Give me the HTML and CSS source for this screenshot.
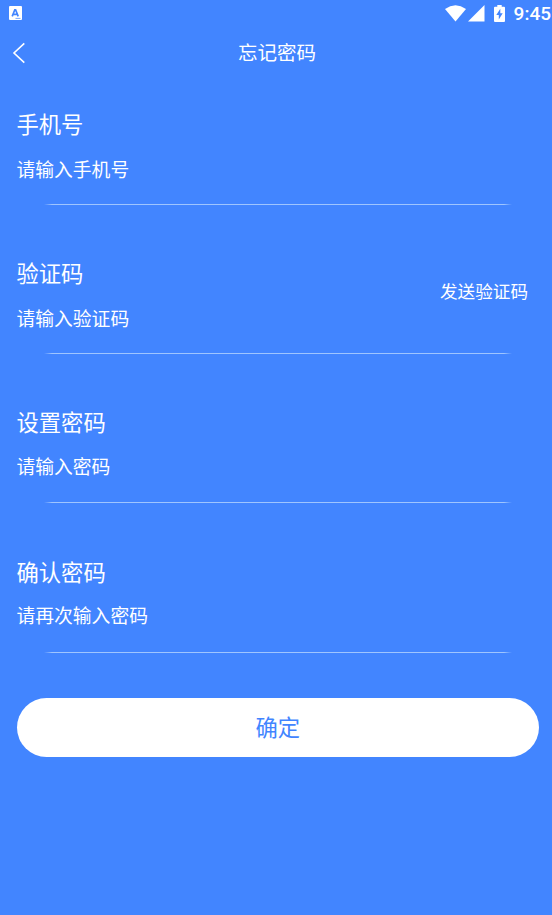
FILE: index.html
```html
<!DOCTYPE html>
<html lang="zh-CN">
<head>
    <meta charset="UTF-8">
    <meta name="viewport" content="width=device-width, initial-scale=1.0">
    <title>忘记密码</title>
    <link rel="stylesheet" href="styles.css">
</head>
<body>
    <div class="status-bar">
        <svg class="app-icon" width="13" height="14" viewBox="0 0 13 14">
            <rect width="13" height="14" rx="1" fill="#fff"/>
            <path d="M3.2 10.4 L5.8 3.8 H6.6 L9.2 10.4 M4.4 8.3 H8" fill="none" stroke="#4285ff" stroke-width="1.7"/>
            <path d="M6.5 12.4 H11.5" stroke="#4285ff" stroke-width="0.7"/>
        </svg>
        <div class="status-right">
            <svg class="wifi" width="21" height="17" viewBox="0 0 21 17">
                <path d="M0 4 Q10.5 -3.4 21 4 L10.5 16.5 Z" fill="#fff"/>
            </svg>
            <svg class="signal" width="17" height="17" viewBox="0 0 17 17">
                <path d="M16.5 0 V16.5 H0 Z" fill="#fff"/>
            </svg>
            <svg class="battery" width="11" height="17" viewBox="0 0 11 17">
                <path d="M3.3 0 H7.7 V1.7 H10 Q11 1.7 11 2.7 V16 Q11 17 10 17 H1 Q0 17 0 16 V2.7 Q0 1.7 1 1.7 H3.3 Z" fill="#fff"/>
                <path d="M6.3 3.8 L2.3 10 H4.8 V14.4 L8.7 8.2 H6.3 Z" fill="#4285ff"/>
            </svg>
            <span class="time">9:45</span>
        </div>
    </div>

    <div class="header">
        <svg class="back" width="14" height="22" viewBox="0 0 14 22">
            <path d="M12.3 1.4 L2 11 L12.3 20.6" fill="none" stroke="#fff" stroke-width="1.6"/>
        </svg>
        <h1>忘记密码</h1>
    </div>

    <form class="form">
        <div class="field">
            <label for="phone">手机号</label>
            <input id="phone" type="text" placeholder="请输入手机号">
            <div class="line"></div>
        </div>
        <div class="field code-field">
            <div class="code-left">
                <label for="code">验证码</label>
                <input id="code" type="text" placeholder="请输入验证码">
            </div>
            <button type="button" class="send">发送验证码</button>
            <div class="line"></div>
        </div>
        <div class="field password-field">
            <label for="password">设置密码</label>
            <input id="password" type="password" placeholder="请输入密码">
            <div class="line"></div>
        </div>
        <div class="field password-field">
            <label for="confirm">确认密码</label>
            <input id="confirm" type="password" placeholder="请再次输入密码">
            <div class="line"></div>
        </div>
        <button type="button" class="submit">确定</button>
    </form>
</body>
</html>
```
FILE: styles.css
```css
* {
    box-sizing: border-box;
}

body {
    margin: 0;
    min-height: 100vh;
    background-color: #4285ff;
    color: #fff;
    font-family: "Noto Sans CJK SC", sans-serif;
}

.status-bar {
    display: flex;
    justify-content: space-between;
    height: 30px;
    padding: 5px 1px 0 9px;
}

.app-icon {
    margin-top: 1px;
}

.status-right {
    display: flex;
    align-items: flex-start;
}

.signal {
    margin-left: 2px;
}

.battery {
    margin-left: 9px;
}

.time {
    margin-left: 9px;
    font-family: Roboto, sans-serif;
    font-size: 19px;
    font-weight: 500;
    line-height: 18px;
}

.header {
    display: flex;
    align-items: center;
    height: 46px;
    padding: 0 12px;
}

.header h1 {
    flex: 1;
    margin: 0 12px 0 0;
    padding-bottom: 3px;
    text-align: center;
    font-size: 19.5px;
    font-weight: 400;
}

.form {
    padding: 31.5px 13px 0 16.5px;
}

.field {
    height: 149.4px;
}

.field label {
    display: block;
    font-size: 22.3px;
    font-weight: 400;
    line-height: 30px;
}

.field input {
    display: block;
    width: 100%;
    height: 30px;
    margin-top: 16px;
    padding: 0;
    border: none;
    outline: none;
    background: none;
    color: #fff;
    font-family: inherit;
    font-size: 18.8px;
    font-weight: 400;
}

.field input::placeholder {
    color: #fff;
    opacity: 1;
}

.line {
    height: 1px;
    margin: 20px 27px 0 27px;
    background: linear-gradient(to right, transparent, #9fc5ff 8px, #9fc5ff calc(100% - 8px), transparent);
}

.password-field input {
    margin-top: 14px;
}

.password-field .line {
    margin-top: 22px;
}

.code-field {
    display: flex;
    flex-wrap: wrap;
    align-content: flex-start;
}

.code-left {
    flex: 1;
}

.code-field .line {
    width: 100%;
}

button {
    border: none;
    font-family: inherit;
    font-weight: 400;
    cursor: pointer;
}

.send {
    height: 30px;
    margin: 19px 11px 0 0;
    padding: 0;
    background: none;
    color: #fff;
    font-size: 17.6px;
}

.submit {
    display: block;
    width: 100%;
    height: 59px;
    margin-top: -7.4px;
    padding: 0 0 2px;
    border-radius: 30px;
    background-color: #fff;
    color: #4285ff;
    font-size: 22.3px;
}
```
